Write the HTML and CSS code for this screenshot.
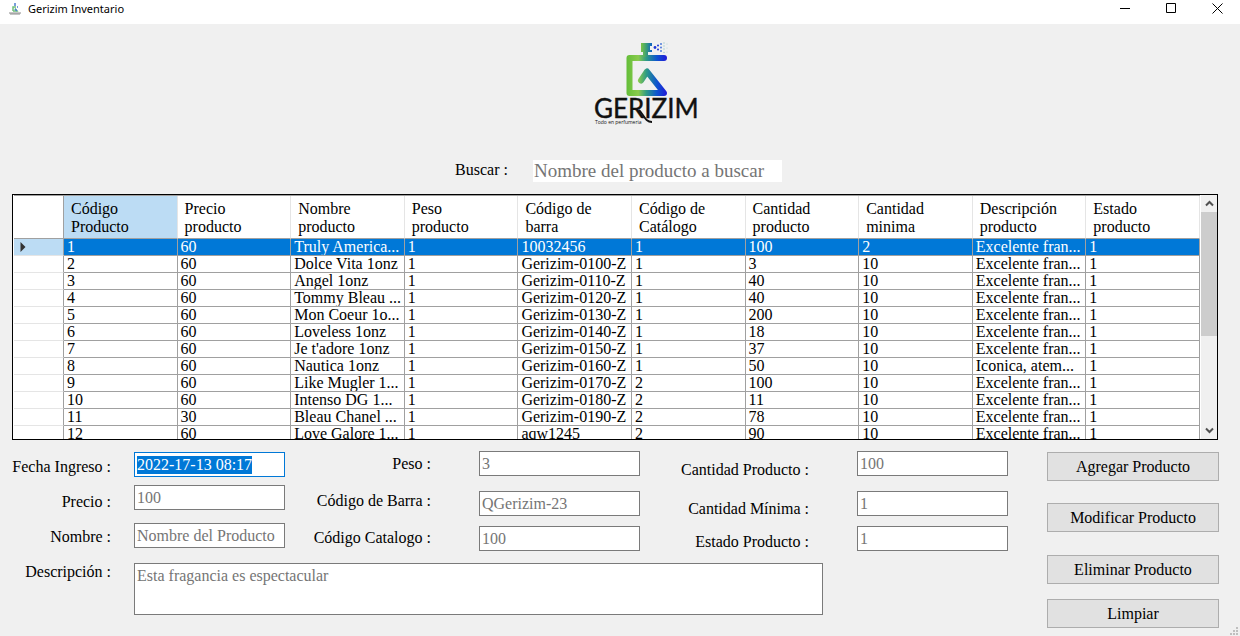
FILE: index.html
```html
<!DOCTYPE html>
<html lang="es">
<head>
<meta charset="utf-8">
<title>Gerizim Inventario</title>
<link rel="stylesheet" href="styles.css">
</head>
<body>
<header class="titlebar">
  <svg class="app-icon" viewBox="0 0 12 12" aria-hidden="true">
    <path d="M4 8V4h3M4 8h4L6 5.500" fill="none" stroke="#6fbf7a" stroke-width="1.500"/>
    <path d="M6 0v3M8 4h1M6 6l2 2" fill="none" stroke="#4f7fd0" stroke-width="1.500"/>
    <path d="M0 10h12M1 11h10" stroke="#8a8a8a"/>
  </svg>
  <h1 class="title">Gerizim Inventario</h1>
  <button class="winbtn" type="button" aria-label="Minimizar"><svg viewBox="0 0 11 11"><path d="M0 5.500h10" stroke="#000"/></svg></button>
  <button class="winbtn" type="button" aria-label="Maximizar"><svg viewBox="0 0 11 11"><path d="M.5.5h9v9h-9z" fill="none" stroke="#000"/></svg></button>
  <button class="winbtn" type="button" aria-label="Cerrar"><svg viewBox="0 0 11 11"><path d="M.5.5l10 10M10.500.5l-10 10" stroke="#000"/></svg></button>
</header>

<main class="content">
  <svg class="logo" viewBox="0 0 106 86" role="img" aria-label="Gerizim, todo en perfumeria">
    <defs>
      <linearGradient id="brand" gradientUnits="userSpaceOnUse" x1="32" y1="0" x2="73" y2="0">
        <stop offset="0" stop-color="#62bd38"/><stop offset=".3" stop-color="#8acb4d"/>
        <stop offset=".5" stop-color="#2d9a86"/><stop offset=".75" stop-color="#0d55cf"/><stop offset="1" stop-color="#2118d8"/>
      </linearGradient>
      <linearGradient id="cap" gradientUnits="userSpaceOnUse" x1="47" y1="0" x2="58" y2="0">
        <stop offset="0" stop-color="#7cc544"/><stop offset=".5" stop-color="#3a9d78"/><stop offset="1" stop-color="#0d5fc8"/>
      </linearGradient>
    </defs>
    <g fill="none" stroke="url(#brand)" stroke-width="6" stroke-linecap="round" stroke-linejoin="round">
      <path d="M70 17H35.500V52H70L53 30.500L47 39.500"/>
    </g>
    <path d="M47 2h11v3h-2v4h2v2h-4v5h-5v-5h-2z" fill="url(#cap)"/>
    <g fill="#1d36d6"><circle cx="61" cy="6.500" r="1.400"/><circle cx="64" cy="4.500" r="1"/><circle cx="64" cy="8.500" r="1"/></g>
    <g fill="#3d6fd9"><circle cx="67" cy="3" r=".9"/><circle cx="67" cy="6.500" r=".9"/><circle cx="67" cy="10" r=".9"/></g>
    <g fill="#a8cfd0"><circle cx="70" cy="2" r=".8"/><circle cx="70" cy="5" r=".8"/><circle cx="70" cy="8" r=".8"/><circle cx="70" cy="11.500" r=".8"/><circle cx="73" cy="3" r=".5"/><circle cx="73" cy="7" r=".5"/><circle cx="73" cy="11" r=".5"/></g>
    <text class="logo-name" x="0" y="77">GERIZIM</text>
    <path d="M45 69C50 74 51 81 58 81" fill="none" stroke="#111" stroke-width="1.800"/>
    <text class="logo-tag" x="1" y="83">Todo en perfumeria</text>
  </svg>

  <form class="search" role="search">
    <label for="buscar">Buscar :</label>
    <input id="buscar" class="search-input" type="text" placeholder="Nombre del producto a buscar">
  </form>

  <section class="grid-pane">
    <div class="grid-view">
      <table class="grid">
        <thead>
          <tr><th class="rowhead"></th><th class="current">Código Producto</th><th>Precio producto</th><th>Nombre producto</th><th>Peso producto</th><th>Código de barra</th><th>Código de Catálogo</th><th>Cantidad producto</th><th>Cantidad minima</th><th>Descripción producto</th><th>Estado producto</th></tr>
        </thead>
        <tbody>
          <tr class="selected"><th class="rowhead"><svg class="marker" viewBox="0 0 6 10" aria-label="Fila actual"><path d="M.5 0L5.500 5L.5 10z" fill="#333"/></svg></th><td>1</td><td>60</td><td>Truly America...</td><td>1</td><td>10032456</td><td>1</td><td>100</td><td>2</td><td>Excelente fran...</td><td>1</td></tr>
          <tr><th class="rowhead"></th><td>2</td><td>60</td><td>Dolce Vita 1onz</td><td>1</td><td>Gerizim-0100-Z</td><td>1</td><td>3</td><td>10</td><td>Excelente fran...</td><td>1</td></tr>
          <tr><th class="rowhead"></th><td>3</td><td>60</td><td>Angel 1onz</td><td>1</td><td>Gerizim-0110-Z</td><td>1</td><td>40</td><td>10</td><td>Excelente fran...</td><td>1</td></tr>
          <tr><th class="rowhead"></th><td>4</td><td>60</td><td>Tommy Bleau ...</td><td>1</td><td>Gerizim-0120-Z</td><td>1</td><td>40</td><td>10</td><td>Excelente fran...</td><td>1</td></tr>
          <tr><th class="rowhead"></th><td>5</td><td>60</td><td>Mon Coeur 1o...</td><td>1</td><td>Gerizim-0130-Z</td><td>1</td><td>200</td><td>10</td><td>Excelente fran...</td><td>1</td></tr>
          <tr><th class="rowhead"></th><td>6</td><td>60</td><td>Loveless 1onz</td><td>1</td><td>Gerizim-0140-Z</td><td>1</td><td>18</td><td>10</td><td>Excelente fran...</td><td>1</td></tr>
          <tr><th class="rowhead"></th><td>7</td><td>60</td><td>Je t'adore 1onz</td><td>1</td><td>Gerizim-0150-Z</td><td>1</td><td>37</td><td>10</td><td>Excelente fran...</td><td>1</td></tr>
          <tr><th class="rowhead"></th><td>8</td><td>60</td><td>Nautica 1onz</td><td>1</td><td>Gerizim-0160-Z</td><td>1</td><td>50</td><td>10</td><td>Iconica, atem...</td><td>1</td></tr>
          <tr><th class="rowhead"></th><td>9</td><td>60</td><td>Like Mugler 1...</td><td>1</td><td>Gerizim-0170-Z</td><td>2</td><td>100</td><td>10</td><td>Excelente fran...</td><td>1</td></tr>
          <tr><th class="rowhead"></th><td>10</td><td>60</td><td>Intenso DG 1...</td><td>1</td><td>Gerizim-0180-Z</td><td>2</td><td>11</td><td>10</td><td>Excelente fran...</td><td>1</td></tr>
          <tr><th class="rowhead"></th><td>11</td><td>30</td><td>Bleau Chanel ...</td><td>1</td><td>Gerizim-0190-Z</td><td>2</td><td>78</td><td>10</td><td>Excelente fran...</td><td>1</td></tr>
          <tr><th class="rowhead"></th><td>12</td><td>60</td><td>Love Galore 1...</td><td>1</td><td>aqw1245</td><td>2</td><td>90</td><td>10</td><td>Excelente fran...</td><td>1</td></tr>
        </tbody>
      </table>
    </div>
    <div class="scrollbar">
      <button class="arrow" type="button" aria-label="Subir"><svg viewBox="0 0 9 7"><path d="M1 5.500L4.500 2L8 5.500" fill="none" stroke="#505050" stroke-width="2"/></svg></button>
      <div class="track"><div class="thumb"></div></div>
      <button class="arrow" type="button" aria-label="Bajar"><svg viewBox="0 0 9 7"><path d="M1 1.500L4.500 5L8 1.500" fill="none" stroke="#505050" stroke-width="2"/></svg></button>
    </div>
  </section>

  <form class="editor">
    <div class="labels labels-a">
      <label for="fecha">Fecha Ingreso :</label>
      <label for="precio">Precio :</label>
      <label for="nombre">Nombre :</label>
      <label for="descripcion">Descripción :</label>
    </div>
    <div class="fields fields-a">
      <input id="fecha" type="text" value="2022-17-13 08:17" autofocus>
      <input id="precio" type="text" placeholder="100">
      <input id="nombre" type="text" placeholder="Nombre del Producto">
    </div>
    <div class="labels labels-b">
      <label for="peso">Peso :</label>
      <label for="barra">Código de Barra :</label>
      <label for="catalogo">Código Catalogo :</label>
    </div>
    <div class="fields fields-b">
      <input id="peso" type="text" placeholder="3">
      <input id="barra" type="text" placeholder="QGerizim-23">
      <input id="catalogo" type="text" placeholder="100">
    </div>
    <div class="labels labels-c">
      <label for="cantidad">Cantidad Producto :</label>
      <label for="minima">Cantidad Mínima :</label>
      <label for="estado">Estado Producto :</label>
    </div>
    <div class="fields fields-c">
      <input id="cantidad" type="text" placeholder="100">
      <input id="minima" type="text" placeholder="1">
      <input id="estado" type="text" placeholder="1">
    </div>
    <textarea id="descripcion" placeholder="Esta fragancia es espectacular"></textarea>
    <div class="actions">
      <button type="button">Agregar Producto</button>
      <button type="button">Modificar Producto</button>
      <button type="button">Eliminar Producto</button>
      <button type="button">Limpiar</button>
    </div>
  </form>
</main>
<svg class="grip" viewBox="0 0 8 8" aria-hidden="true"><path d="M6 0h2v2h-2zM3 3h2v2h-2zM6 3h2v2h-2zM0 6h2v2h-2zM3 6h2v2h-2zM6 6h2v2h-2z" fill="#bfbfbf"/></svg>
<script src="app.js"></script>
</body>
</html>
```
FILE: styles.css
```css
* { box-sizing: border-box; }

body {
  margin: 0;
  height: 100vh;
  display: flex;
  flex-direction: column;
  overflow: hidden;
  background: #f0f0f0;
  color: #000;
  font: 16px/20px "Liberation Serif", serif;
}

input, textarea, button { font: inherit; color: inherit; border-radius: 0; }
::placeholder { color: #757575; opacity: 1; }
::selection { background: #0078d7; color: #fff; }

.titlebar {
  display: flex;
  align-items: center;
  height: 24px;
  padding: 0 0 7px 9px;
  background: #fff;
}
.app-icon { width: 12px; height: 12px; margin-right: 7px; }
.title {
  flex: 1;
  margin: 0;
  font: 11px/16px "Noto Sans", sans-serif;
}
.winbtn {
  width: 46px;
  height: 16px;
  padding: 0;
  border: 0;
  background: none;
  display: flex;
  align-items: center;
  justify-content: center;
}
.winbtn svg { width: 11px; height: 11px; }

.content {
  flex: 1;
  min-height: 0;
  display: flex;
  flex-direction: column;
}

.logo {
  width: 106px;
  height: 86px;
  margin: 17px 0 33px 54px;
  align-self: center;
  flex: none;
}
.logo-name { font: 26px Lato, sans-serif; fill: #111; stroke: #111; stroke-width: .4px; }
.logo-tag { font: 5px "Open Sans", sans-serif; fill: #111; }

.search {
  display: flex;
  justify-content: center;
  gap: 25px;
  margin: 0 3px 12px 0;
}
.search-input {
  width: 249px;
  height: 22px;
  padding: 0 1px;
  border: 0;
  background: #fff;
  font-size: 19px;
}

.grid-pane {
  flex: 1;
  min-height: 0;
  display: flex;
  margin: 0 22px 0 12px;
  padding-left: 1px;
  border: 1px solid #000;
  background: #fff;
}
.grid-view { flex: 1; overflow: hidden; border-top: 1px solid #a0a0a0; }
.grid {
  width: 100%;
  table-layout: fixed;
  border-collapse: separate;
  border-spacing: 0;
}
.grid th, .grid td {
  padding: 0 0 0 3px;
  font-weight: normal;
  text-align: left;
  white-space: nowrap;
  overflow: hidden;
  line-height: 16px;
  border-right: 1px solid #a0a0a0;
  border-bottom: 1px solid #a0a0a0;
}
.grid td { height: 17px; }
.grid thead th {
  height: 43px;
  padding: 4px 32px 2px 7px;
  line-height: 18px;
  white-space: normal;
  border-right-color: #e5e5e5;
}
.grid thead .rowhead { padding: 0; }
.grid .rowhead, .grid thead .rowhead { width: 50px; border-right-color: #a0a0a0; }
.grid tbody .rowhead { border-bottom-color: #e5e5e5; padding-left: 6px; }
.grid .current, .grid .selected .rowhead { background: #bcdcf4; }
.grid .selected td { background: #0078d7; color: #fff; }
.marker { display: block; width: 6px; height: 10px; }

.scrollbar {
  width: 16px;
  margin-left: 1px;
  display: flex;
  flex-direction: column;
  background: #f0f0f0;
}
.arrow {
  height: 17px;
  padding: 0;
  border: 0;
  background: none;
  display: flex;
  align-items: center;
  justify-content: center;
}
.arrow svg { width: 9px; height: 7px; }
.track { flex: 1; }
.thumb { height: 59%; background: #cdcdcd; }

.editor {
  display: grid;
  grid-template-columns: 134fr 151fr 194fr 161fr 183fr 34fr 151fr 39fr 172fr 21fr;
  grid-template-rows: 112px auto;
  padding: 11px 0 8px;
}
.labels, .fields, .actions { display: grid; align-content: start; }
.labels { text-align: right; white-space: nowrap; padding-right: 48px; }
.labels-a {
  grid-area: 1 / 1 / 3 / 2;
  grid-auto-rows: 35px;
  padding: 6px 23px 0 0;
}
.fields-a { grid-area: 1 / 2; grid-template-rows: 33px 38px 25px; padding-top: 1px; }
.labels-b { grid-area: 1 / 3; grid-auto-rows: 37px; padding-top: 3px; }
.fields-b { grid-area: 1 / 4; }
.labels-c { grid-area: 1 / 5 / 2 / 7; grid-template-rows: 39px 33px 20px; padding-top: 9px; }
.fields-c { grid-area: 1 / 7; }
.fields-b, .fields-c { grid-template-rows: 40px 35px 25px; }

.editor input, .editor textarea {
  width: 100%;
  min-width: 0;
  padding: 0 2px;
  border: 1px solid #7a7a7a;
  background: #fff;
  outline: 0;
}
.editor input { height: 25px; }
.editor input:focus { border-color: #0078d7; }
.editor textarea {
  grid-area: 2 / 2 / 3 / 6;
  height: 52px;
  padding-top: 2px;
  resize: none;
}

.actions {
  grid-area: 1 / 9 / 3 / 10;
  grid-template-rows: 51px 52px 44px 29px;
  padding-top: 1px;
}
.actions button {
  height: 29px;
  padding: 0;
  border: 1px solid #adadad;
  background: #e1e1e1;
}

.grip { position: absolute; right: 2px; bottom: 1px; width: 8px; height: 8px; }
```
FILE: app.js
```js
const dateField = document.getElementById("fecha");
dateField.focus();
dateField.select();
```
